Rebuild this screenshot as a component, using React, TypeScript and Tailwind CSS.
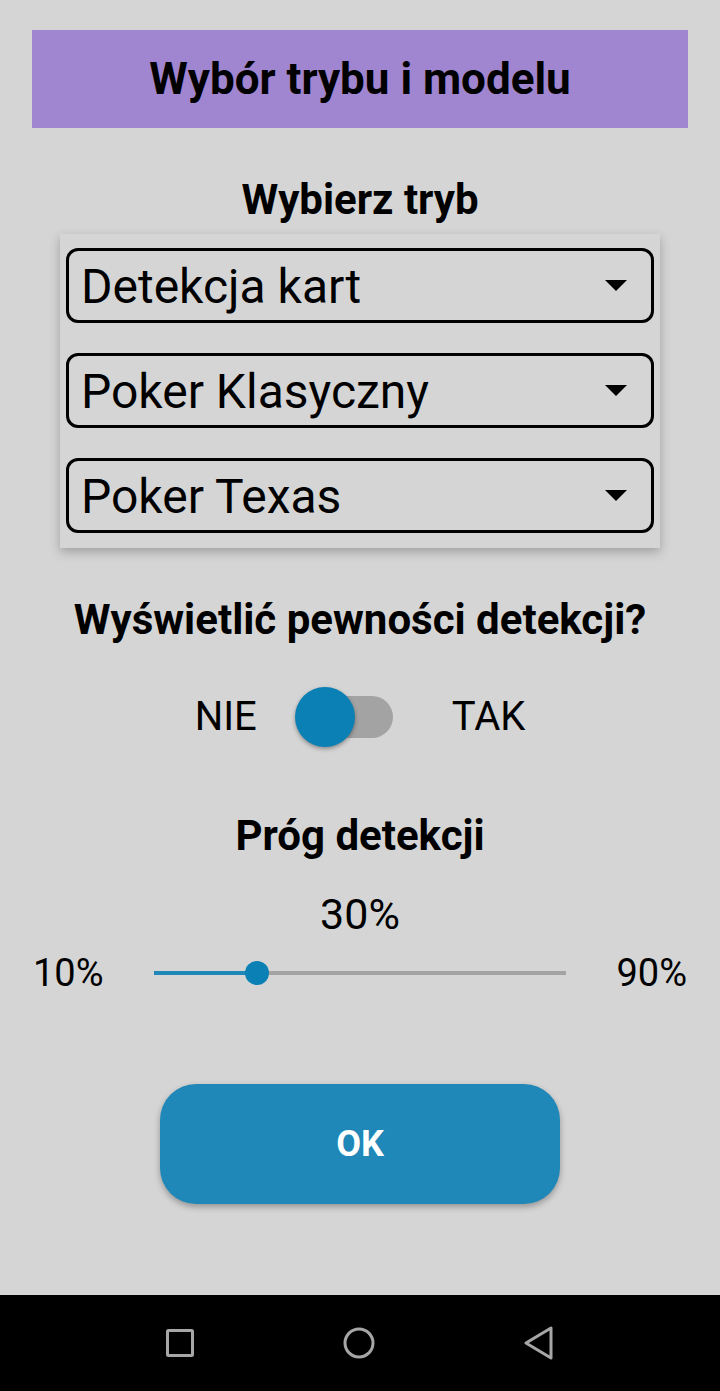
import { useState } from 'react';

function Dropdown({ label }: { label: string }) {
  return (
    <div className="h-[75px] border-[3px] border-black rounded-[12px] flex items-center justify-between pl-[12px] pr-[24px]">
      <span className="pt-[3px] text-[48px] leading-none text-black">{label}</span>
      <svg width="22" height="11" viewBox="0 0 22 11">
        <path d="M0 0 L22 0 L11 11 Z" fill="#000" />
      </svg>
    </div>
  );
}

export default function App() {
  const [on, setOn] = useState(false);
  const value = 30;
  const pct = ((value - 10) / 80) * 100;

  return (
    <div className="min-h-screen flex flex-col bg-[#d5d5d5] font-['Roboto',sans-serif] text-black">
      <div className="flex-1 flex flex-col items-center">
        {/* Header */}
        <div className="mt-[30px] w-[656px] h-[98px] bg-[#a085d0] flex items-center justify-center">
          <h1 className="text-[44px] font-bold leading-none">Wybór trybu i modelu</h1>
        </div>

        <h2 className="mt-[52px] text-[42px] font-bold leading-[40px]">Wybierz tryb</h2>

        {/* Mode pickers */}
        <div className="mt-[14px] w-[600px] px-[6px] pt-[14px] pb-[15px] flex flex-col gap-[30px] bg-[#d5d5d5] shadow-[0_4px_10px_rgba(0,0,0,0.25)]">
          <Dropdown label="Detekcja kart" />
          <Dropdown label="Poker Klasyczny" />
          <Dropdown label="Poker Texas" />
        </div>

        <h2 className="mt-[51px] text-[42px] font-bold leading-[42px]">Wyświetlić pewności detekcji?</h2>

        {/* Switch */}
        <div className="mt-[46px] h-[60px] flex items-center">
          <span className="text-[40px] leading-none">NIE</span>
          <button
            onClick={() => setOn(!on)}
            className="relative ml-[38px] w-[98px] h-[60px] flex items-center"
          >
            <div className="ml-[30px] w-[68px] h-[42px] rounded-full bg-[#a3a3a3]" />
            <div
              className={`absolute top-0 w-[60px] h-[60px] rounded-full bg-[#0a80b5] shadow-[0_2px_4px_rgba(0,0,0,0.35)] ${on ? 'left-[38px]' : 'left-0'}`}
            />
          </button>
          <span className="ml-[59px] text-[40px] leading-none">TAK</span>
        </div>

        <h2 className="mt-[68px] text-[42px] font-bold leading-[42px]">Próg detekcji</h2>

        <div className="mt-[35px] text-[43px] leading-[44px]">{value}%</div>

        {/* Slider */}
        <div className="mt-[16px] w-full px-[33px] h-[42px] flex items-center justify-between">
          <span className="text-[38px] leading-none">10%</span>
          <div className="relative w-[412px] h-[4px] bg-[#a3a3a3]">
            <div className="absolute left-0 top-0 h-full bg-[#1f88b8]" style={{ width: `${pct}%` }} />
            <div
              className="absolute top-1/2 w-[24px] h-[24px] -ml-[12px] -mt-[12px] rounded-full bg-[#0a80b5]"
              style={{ left: `${pct}%` }}
            />
          </div>
          <span className="text-[38px] leading-none">90%</span>
        </div>

        <button className="mt-[90px] w-[400px] h-[120px] rounded-[36px] bg-[#1f88b8] text-white text-[36px] font-bold shadow-[0_3px_6px_rgba(0,0,0,0.3)]">
          OK
        </button>
      </div>

      {/* Nav bar */}
      <div className="h-[96px] bg-black flex items-center justify-between px-[165px]">
        <svg width="30" height="30" viewBox="0 0 30 30">
          <rect x="2.5" y="2.5" width="25" height="25" rx="1" fill="none" stroke="#a6a6a6" strokeWidth="3" />
        </svg>
        <svg width="34" height="34" viewBox="0 0 34 34">
          <circle cx="17" cy="17" r="14" fill="none" stroke="#a6a6a6" strokeWidth="3" />
        </svg>
        <svg width="32" height="34" viewBox="0 0 32 34">
          <path d="M28 2 L28 32 L3 17 Z" fill="none" stroke="#a6a6a6" strokeWidth="3" strokeLinejoin="round" />
        </svg>
      </div>
    </div>
  );
}
